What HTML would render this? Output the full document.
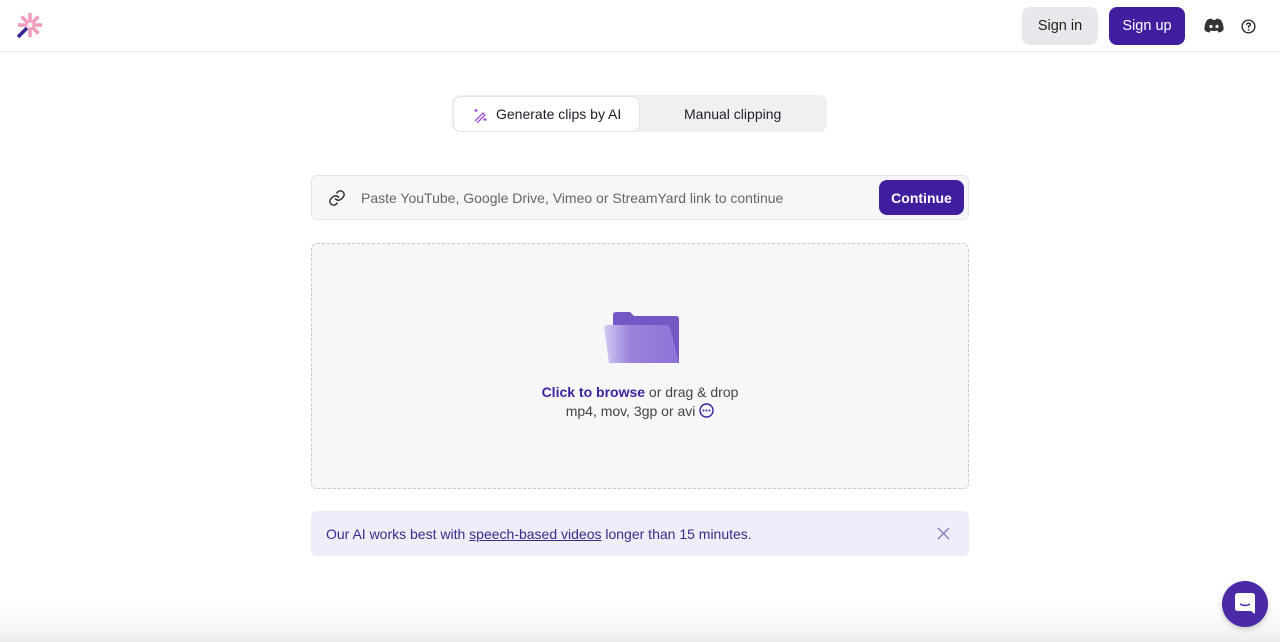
<!DOCTYPE html>
<html><head><meta charset="utf-8"><style>
*{box-sizing:border-box;margin:0;padding:0}
html,body{width:1280px;height:642px;overflow:hidden}
body{background:#fff;font-family:"Liberation Sans",sans-serif;position:relative;color:#1f1f29}
.hdr{height:52px;border-bottom:1px solid #ececf0;box-shadow:0 1px 3px rgba(0,0,0,.04);position:relative}
.btn{position:absolute;top:7px;height:38px;border-radius:8px;font-size:14.5px;display:flex;align-items:center;justify-content:center}
.tabs{position:absolute;left:452px;top:95px;width:375px;height:37px;background:#f0f0f3;border-radius:8px}
.tab1{position:absolute;left:1px;top:1px;width:187px;height:36px;background:#fff;border:1px solid #e2e2e8;border-radius:8px;font-size:14px;display:flex;align-items:center;padding-left:42px}
.inp{position:absolute;left:311px;top:175px;width:658px;height:45px;background:#f7f7f9;border:1px solid #e4e4e9;border-radius:6px}
.drop{position:absolute;left:311px;top:243px;width:658px;height:246px;background:#f7f7f9;border:1px dashed #c9c9d0;border-radius:6px}
.note{position:absolute;left:311px;top:511px;width:658px;height:45px;background:#efedf9;border-radius:6px;font-size:14px;color:#3d2a8c;padding:15px 0 0 15px}
</style></head><body>
<div class="hdr">
<svg style="position:absolute;left:15px;top:12px" width="28" height="28" viewBox="0 0 28 28">
<g stroke="#f29bbd" stroke-width="3.5"><line x1="15" y1="1" x2="15" y2="25"/><line x1="3" y1="13" x2="27" y2="13"/><line x1="6.5" y1="4.5" x2="23.5" y2="21.5"/><line x1="23.5" y1="4.5" x2="14" y2="14"/></g>
<circle cx="15" cy="13" r="2.5" fill="#fff"/>
<line x1="3" y1="25" x2="12" y2="16" stroke="#3c2296" stroke-width="3.5"/></svg>
<div class="btn" style="left:1022px;width:76px;background:#e8e8ec;color:#222">Sign in</div>
<div class="btn" style="left:1109px;width:76px;background:#3f1fa0;color:#fff">Sign up</div>
<svg style="position:absolute;left:1204px;top:18px" width="20" height="15" viewBox="0 0 20 15"><path d="M3 2Q7 0 8 1L9 2H11L12 1Q13 0 17 2Q20 7 19.5 12Q17 14.5 14.5 14.5L13.5 12.5Q10 13.5 6.5 12.5L5.5 14.5Q3 14.5 0.5 12Q0 7 3 2Z" fill="#333"/><circle cx="7" cy="8.5" r="1.6" fill="#fff"/><circle cx="13" cy="8.5" r="1.6" fill="#fff"/></svg>
<svg style="position:absolute;left:1241px;top:19px" width="15" height="15" viewBox="0 0 16 16"><circle cx="8" cy="8" r="6.8" fill="none" stroke="#222" stroke-width="1.4"/><path d="M6 6.2Q6 4.3 8 4.3Q10 4.3 10 6Q10 7.2 8 8V9.3" fill="none" stroke="#222" stroke-width="1.4"/><circle cx="8" cy="11.5" r=".9" fill="#222"/></svg>
</div>
<div class="tabs"><div class="tab1"><svg style="position:absolute;left:19px;top:11px" width="15" height="15" viewBox="0 0 15 15" fill="none" stroke="#9b4fd6" stroke-width="1.3"><path d="M2 13L10 5L12 7L4 15"/><path d="M3 1v3M1.5 2.5h3M12 10v3M10.5 11.5h3"/></svg>Generate clips by AI</div>
<div style="position:absolute;left:232px;top:11px;font-size:14px">Manual clipping</div></div>
<div class="inp">
<svg style="position:absolute;left:16px;top:13px" width="18" height="18" viewBox="0 0 24 24" fill="none" stroke="#333" stroke-width="2" stroke-linecap="round"><path d="M10 13a5 5 0 0 0 7.5.5l3-3a5 5 0 0 0-7-7l-1.7 1.7"/><path d="M14 11a5 5 0 0 0-7.5-.5l-3 3a5 5 0 0 0 7 7l1.7-1.7"/></svg>
<div style="position:absolute;left:49px;top:14px;font-size:14px;color:#666">Paste YouTube, Google Drive, Vimeo or StreamYard link to continue</div>
<div class="btn" style="left:567px;top:4px;width:85px;height:35px;background:#3f1fa0;color:#fff;font-weight:bold;font-size:14px">Continue</div>
</div>
<div class="drop">
<svg style="position:absolute;left:292px;top:68px" width="76" height="52" viewBox="0 0 76 52"><defs><linearGradient id="g" x1="0" x2="1"><stop offset="0" stop-color="#d6ccf2"/><stop offset=".35" stop-color="#9a82db"/><stop offset="1" stop-color="#8e74d6"/></linearGradient></defs><path d="M9 3Q9 0 12 0H26L30 4H72Q75 4 75 7V51H9Z" fill="#7458c4"/><path d="M0 16Q0 13 3 13H62Q65 13 66 16L75 51H5Z" fill="url(#g)"/></svg>
<div style="position:absolute;left:0;width:100%;top:140px;text-align:center;font-size:14px;color:#444"><span style="color:#3f1fa0;font-weight:bold">Click to browse</span> or drag &amp; drop</div>
<div style="position:absolute;left:0;width:100%;top:159px;text-align:center;font-size:14px;color:#444">mp4, mov, 3gp or avi <svg style="vertical-align:-2px" width="15" height="15" viewBox="0 0 15 15"><circle cx="7.5" cy="7.5" r="6.5" fill="none" stroke="#3f1fa0" stroke-width="1.4"/><circle cx="4.5" cy="7.5" r="1" fill="#3f1fa0"/><circle cx="7.5" cy="7.5" r="1" fill="#3f1fa0"/><circle cx="10.5" cy="7.5" r="1" fill="#3f1fa0"/></svg></div>
</div>
<div class="note">Our AI works best with <u>speech-based videos</u> longer than 15 minutes.
<svg style="position:absolute;left:626px;top:16px" width="13" height="13" viewBox="0 0 13 13" stroke="#8a80bf" stroke-width="1.5"><path d="M1 1L12 12M12 1L1 12"/></svg></div>
<div style="position:absolute;left:0;right:0;top:600px;height:42px;background:linear-gradient(#fff,#f6f6f7 70%,#ececee)"></div>
<div style="position:absolute;left:1222px;top:581px;width:46px;height:46px;border-radius:50%;background:#4a2aa6;box-shadow:0 2px 6px rgba(0,0,0,.2)">
<svg style="position:absolute;left:13px;top:12px" width="20" height="22" viewBox="0 0 20 22"><path d="M3 0H17Q20 0 20 3V21L16 18H3Q0 18 0 15V3Q0 0 3 0Z" fill="#fff"/><path d="M5 11Q10 14 15 11" stroke="#4a2aa6" stroke-width="1.5" fill="none"/></svg></div>
</body></html>
